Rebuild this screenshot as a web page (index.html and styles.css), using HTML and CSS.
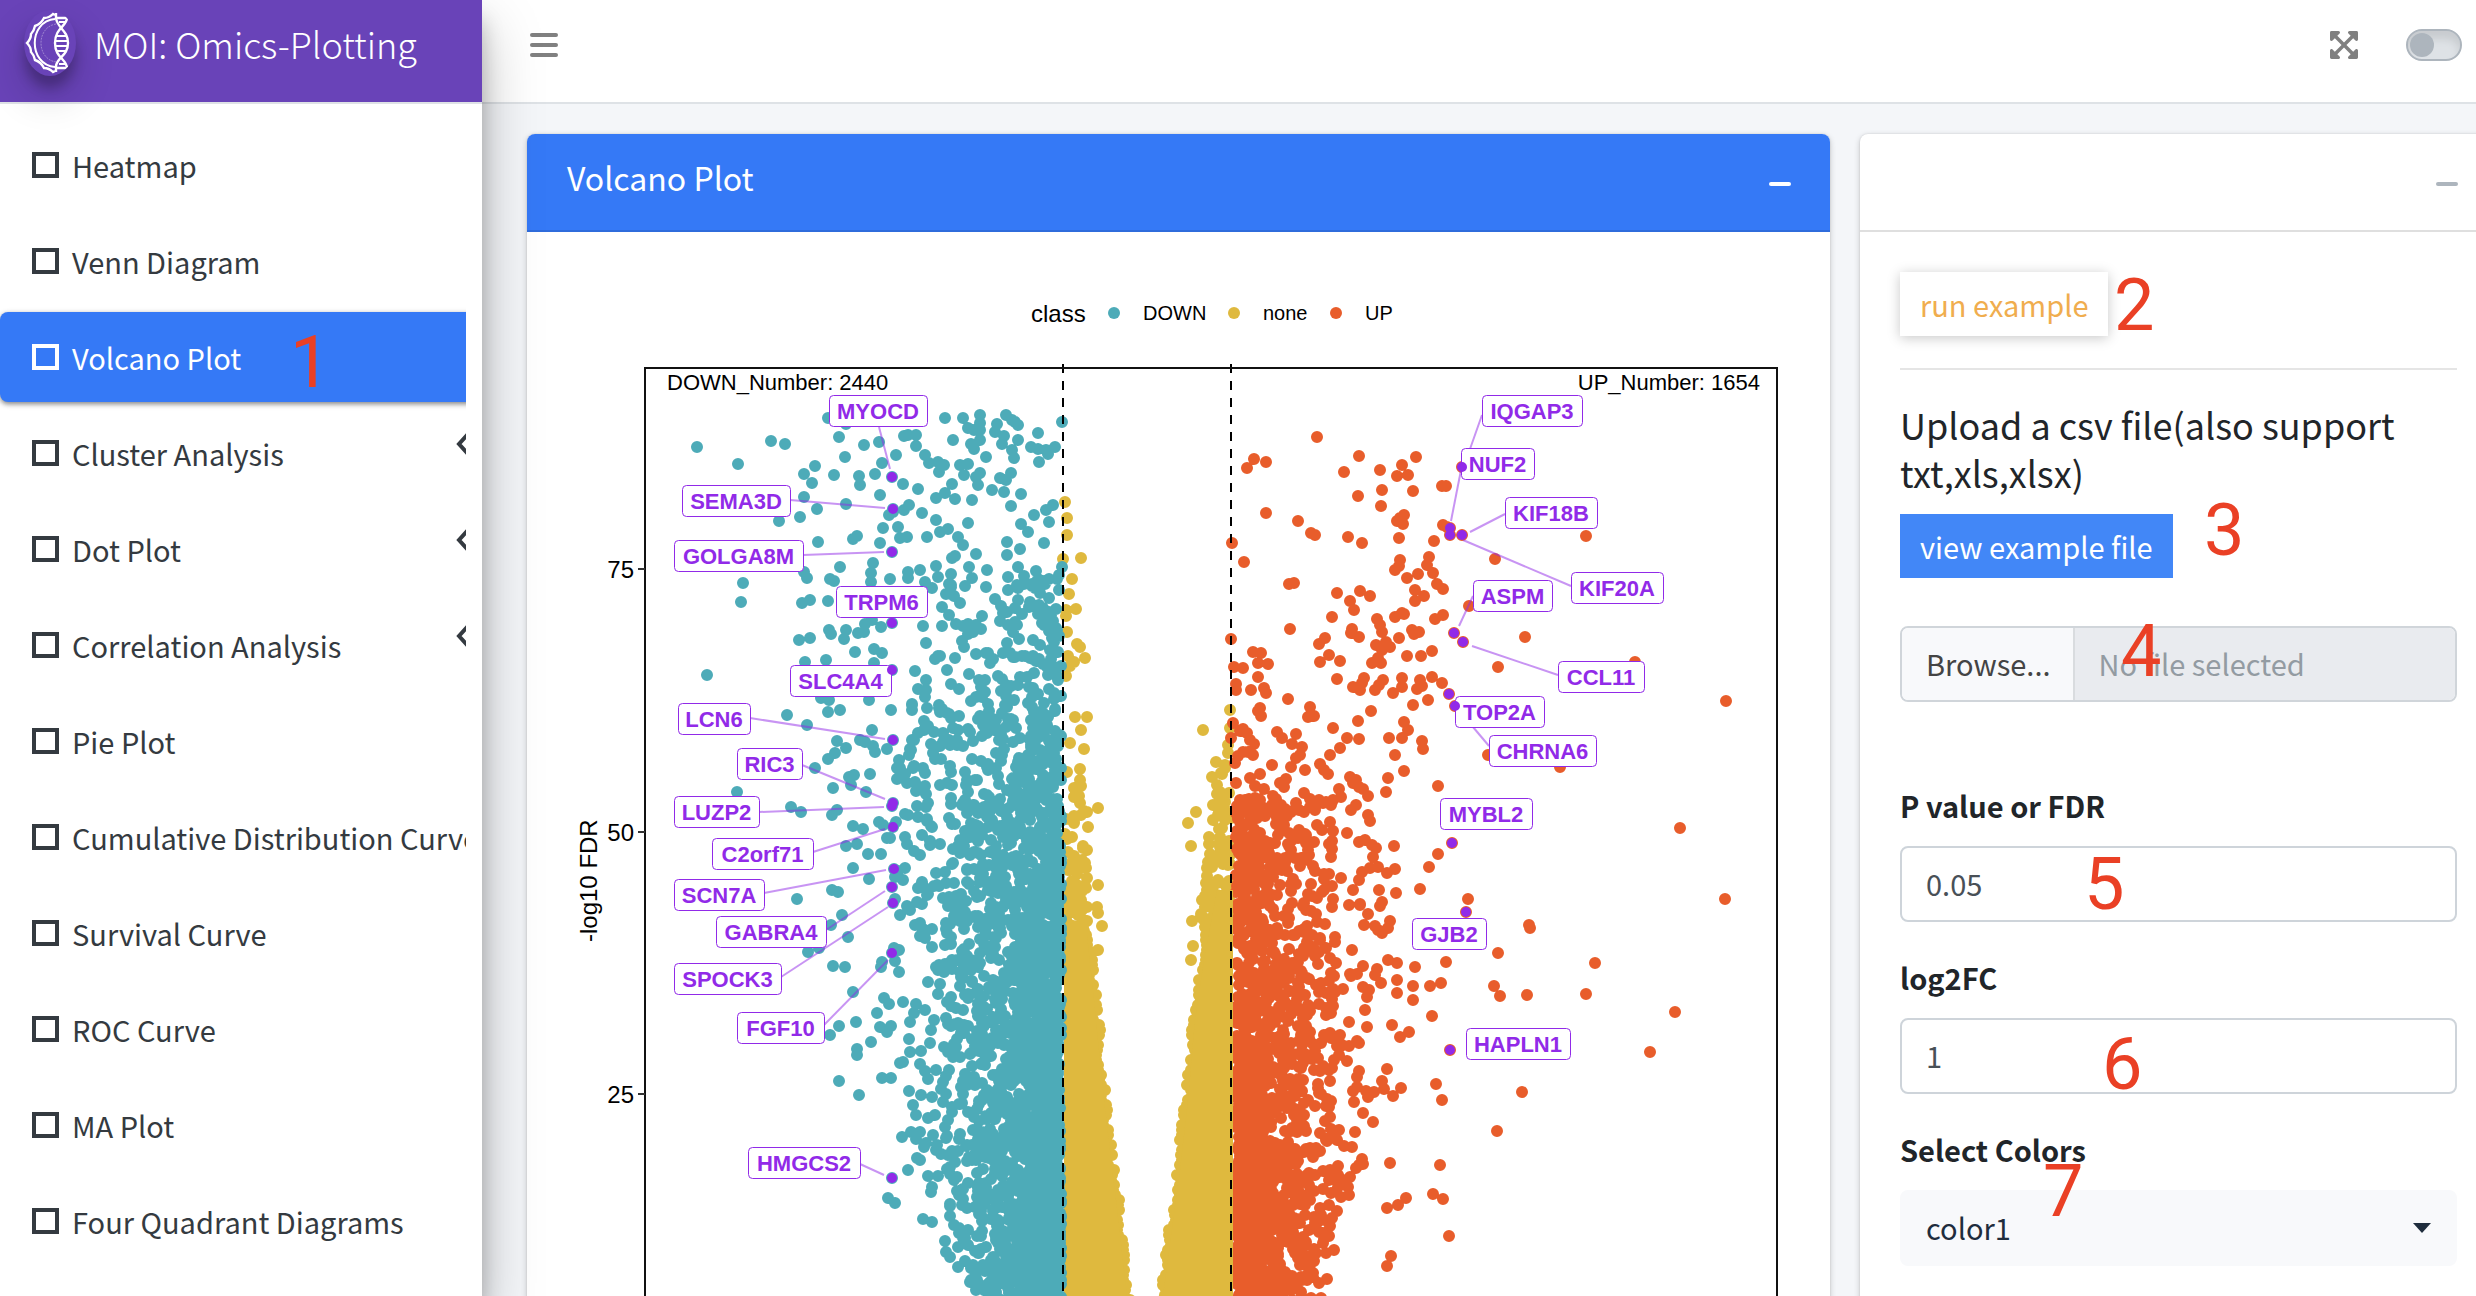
FILE: index.html
```html
<!DOCTYPE html>
<html lang="en">
<head>
<meta charset="utf-8">
<title>MOI: Omics-Plotting</title>
<link rel="stylesheet" href="styles.css">
</head>
<body>
<svg class="sprite" aria-hidden="true">
  <symbol id="i-square" viewBox="0 0 27 26"><rect x="2" y="2" width="23" height="22" fill="none" stroke="currentColor" stroke-width="4"/></symbol>
  <symbol id="i-angle" viewBox="0 0 14 24"><path d="M12 2 3 12l9 10" fill="none" stroke="currentColor" stroke-width="4"/></symbol>
  <symbol id="i-minus" viewBox="0 0 24 6"><rect x="1" y="1" width="22" height="4" rx="2" fill="currentColor"/></symbol>
</svg>
<div class="app">
  <aside class="sidebar">
    <a class="brand" href="#">
      <svg class="brand-logo" viewBox="0 0 52 66" fill="none" stroke="#fff" aria-hidden="true">
        <path d="M31 5 29 4Q25 8 20 8 17 14 11 16 10 21 7 24 7 29 3 33 7 37 7 42 10 45 11 50 17 52 20 58 25 58 29 62L31 61" stroke-width="2.4"/>
        <path d="M31 9C4 11 4 55 31 57" stroke-width="2"/>
        <path d="M32 14C12 17 12 49 32 52" stroke-width="1" stroke-dasharray="2 1" opacity=".35"/>
        <path d="M32 3v5C33 18 44 20 44 33S33 47 32 56v6" stroke-width="2.4"/>
        <path d="M32 8h11c0 8-12 10-12 25s12 16 12 25H32" stroke-width="2.4"/>
        <path d="M33 8h9M35 12h6M32 26h11M31 31h13M31 36h13M32 41h11M35 54h6" stroke-width="2"/>
      </svg>
      <span>MOI: Omics-Plotting</span>
    </a>
    <nav class="nav">
      <a href="#"><svg class="sq"><use href="#i-square"/></svg>Heatmap</a>
      <a href="#"><svg class="sq"><use href="#i-square"/></svg>Venn Diagram</a>
      <a href="#" class="active" aria-current="page"><svg class="sq"><use href="#i-square"/></svg>Volcano Plot<span class="mark mark-1">1</span></a>
      <a href="#"><svg class="sq"><use href="#i-square"/></svg>Cluster Analysis<svg class="angle"><use href="#i-angle"/></svg></a>
      <a href="#"><svg class="sq"><use href="#i-square"/></svg>Dot Plot<svg class="angle"><use href="#i-angle"/></svg></a>
      <a href="#"><svg class="sq"><use href="#i-square"/></svg>Correlation Analysis<svg class="angle"><use href="#i-angle"/></svg></a>
      <a href="#"><svg class="sq"><use href="#i-square"/></svg>Pie Plot</a>
      <a href="#"><svg class="sq"><use href="#i-square"/></svg>Cumulative Distribution Curve</a>
      <a href="#"><svg class="sq"><use href="#i-square"/></svg>Survival Curve</a>
      <a href="#"><svg class="sq"><use href="#i-square"/></svg>ROC Curve</a>
      <a href="#"><svg class="sq"><use href="#i-square"/></svg>MA Plot</a>
      <a href="#"><svg class="sq"><use href="#i-square"/></svg>Four Quadrant Diagrams</a>
    </nav>
  </aside>

  <div class="page">
    <header class="topbar">
      <button class="icon-btn" aria-label="Toggle sidebar">
        <svg width="28" height="24" viewBox="0 0 28 24" fill="currentColor"><rect width="28" height="4" rx="2"/><rect y="10" width="28" height="4" rx="2"/><rect y="20" width="28" height="4" rx="2"/></svg>
      </button>
      <div class="topbar-tools">
        <button class="icon-btn" aria-label="Full screen">
          <svg width="28" height="32" viewBox="0 0 448 512" fill="currentColor"><path d="M448 344v112a23.94 23.94 0 0 1-24 24H312c-21.39 0-32.09-25.9-17-41l36.2-36.2L224 295.6 116.77 402.9 153 439c15.09 15.1 4.39 41-17 41H24a23.94 23.94 0 0 1-24-24V344c0-21.4 25.89-32.1 41-17l36.19 36.2L184.46 256 77.18 148.7 41 185c-15.1 15.1-41 4.4-41-17V56a23.94 23.94 0 0 1 24-24h112c21.39 0 32.09 25.9 17 41l-36.2 36.2L224 216.4l107.23-107.3L295 73c-15.09-15.1-4.39-41 17-41h112a23.94 23.94 0 0 1 24 24v112c0 21.4-25.89 32.1-41 17l-36.19-36.2L263.54 256l107.28 107.3L407 327.1c15.1-15.2 41-4.5 41 16.9z"/></svg>
        </button>
        <input class="switch" type="checkbox" aria-label="Dark mode">
      </div>
    </header>

    <main class="content">
      <section class="card card-primary">
        <div class="card-header">
          <h1>Volcano Plot</h1>
          <button class="collapse" aria-label="Collapse"><svg width="24" height="6"><use href="#i-minus"/></svg></button>
        </div>
        <svg id="plot" class="plot" viewBox="527 232 1303 1280" role="img" aria-label="Volcano plot of log10 FDR">
          <g class="legend">
            <text x="1031" y="322" class="t24">class</text>
            <circle cx="1114" cy="313" r="6" class="down"/><text x="1143" y="320" class="t20">DOWN</text>
            <circle cx="1234" cy="313" r="6" class="none"/><text x="1263" y="320" class="t20">none</text>
            <circle cx="1336" cy="313" r="6" class="up"/><text x="1365" y="320" class="t20">UP</text>
          </g>
          <g id="points"></g>
          <path class="cut" d="M1063 364V1500M1231 364V1500"/>
          <path class="frame" d="M645 1500V368H1777V1500"/>
          <path class="ticks" d="M638 569h7M638 832h7M638 1094h7"/>
          <g class="t24" text-anchor="end">
            <text x="634" y="578">75</text><text x="634" y="841">50</text><text x="634" y="1103">25</text>
          </g>
          <text class="t24" transform="translate(597 942) rotate(-90)">-log10 FDR</text>
          <text class="t22" x="667" y="390">DOWN_Number: 2440</text>
          <text class="t22" x="1760" y="390" text-anchor="end">UP_Number: 1654</text>
          <g id="genes"></g>
        </svg>
      </section>

      <section class="card panel">
        <div class="card-header">
          <button class="collapse" aria-label="Collapse"><svg width="24" height="6"><use href="#i-minus"/></svg></button>
        </div>
        <form class="card-body">
          <button type="button" class="btn btn-run">run example</button>
          <hr>
          <h2>Upload a csv file(also support txt,xls,xlsx)</h2>
          <button type="button" class="btn btn-view">view example file</button>
          <div class="file-group">
            <label class="browse">Browse...<input type="file"></label>
            <input class="file-name" type="text" placeholder="No file selected" aria-label="Selected file" readonly>
          </div>
          <div class="field">
            <label for="fdr">P value or FDR</label>
            <input id="fdr" type="text" value="0.05">
          </div>
          <div class="field">
            <label for="fc">log2FC</label>
            <input id="fc" type="text" value="1">
          </div>
          <div class="field">
            <label for="colors">Select Colors</label>
            <div class="select"><select id="colors"><option>color1</option></select></div>
          </div>
        </form>
        <span class="mark mark-2">2</span>
        <span class="mark mark-3">3</span>
        <span class="mark mark-4">4</span>
        <span class="mark mark-5">5</span>
        <span class="mark mark-6">6</span>
        <span class="mark mark-7">7</span>
      </section>
    </main>
  </div>
</div>
<script src="plot.js"></script>
</body>
</html>
```
FILE: styles.css
```css
*, *::before, *::after { box-sizing: border-box; }

body {
  margin: 0;
  background: #f4f6f9;
  color: #212529;
  font-family: "Noto Sans CJK SC", "Noto Sans", sans-serif;
  font-size: 29px;
  line-height: 48px;
}

a { color: inherit; text-decoration: none; }
button, input, select { font: inherit; color: inherit; margin: 0; }
button { border: 0; background: none; padding: 0; cursor: pointer; }
h1, h2 { margin: 0; font-weight: 400; }

.sprite { position: absolute; width: 0; height: 0; }

.app {
  display: flex;
  height: 100vh;
  overflow: hidden;
}

/* Sidebar */
.sidebar {
  position: relative;
  z-index: 2;
  flex: 0 0 482px;
  min-width: 0;
  background: #fff;
  color: #343a40;
  box-shadow: 0 28px 56px rgba(0, 0, 0, .25), 0 20px 20px rgba(0, 0, 0, .22);
}
.brand {
  display: flex;
  align-items: center;
  gap: 18px;
  height: 104px;
  padding: 0 24px 16px;
  background: #6943b8;
  border-bottom: 2px solid #dee2e6;
  color: #fff;
  font-size: 36px;
  font-weight: 300;
  white-space: nowrap;
}
.brand-logo {
  width: 52px;
  height: 66px;
  border-radius: 50%;
  background: #6943b8;
  box-shadow: 0 20px 40px rgba(0, 0, 0, .19), 0 12px 12px rgba(0, 0, 0, .23);
}
.nav {
  display: flex;
  flex-direction: column;
  gap: 6px;
  margin-right: 16px;
  padding-top: 16px;
  overflow: hidden;
}
.nav a {
  position: relative;
  flex: none;
  display: flex;
  align-items: center;
  gap: 13px;
  width: 480px;
  height: 90px;
  padding-left: 32px;
  border-radius: 8px;
  white-space: nowrap;
}
.nav .active {
  background: #3579f6;
  color: #fff;
  box-shadow: 0 2px 6px rgba(0, 0, 0, .24), 0 2px 4px rgba(0, 0, 0, .3);
}
.sq { flex: none; width: 27px; height: 26px; }
.angle {
  width: 14px;
  height: 24px;
  margin: 0 10px 18px auto;
}

/* Top bar */
.page { flex: 1; min-width: 0; }
.topbar {
  display: flex;
  justify-content: space-between;
  height: 104px;
  padding: 0 14px 12px 48px;
  background: #fff;
  border-bottom: 2px solid #dee2e6;
  color: #808080;
}
.icon-btn { display: flex; align-items: center; }
.topbar-tools { display: flex; align-items: center; gap: 48px; }
.switch {
  appearance: none;
  display: flex;
  align-items: center;
  width: 56px;
  height: 32px;
  padding: 0 2px;
  border: 2px solid #adb5bd;
  border-radius: 16px;
  background: #dee2e6;
  box-shadow: inset 0 8px 8px rgba(0, 0, 0, .1);
}
.switch::before {
  content: "";
  width: 24px;
  height: 24px;
  border-radius: 50%;
  background: #adb5bd;
}

/* Cards; the row runs slightly past the right edge of the window */
.content {
  display: grid;
  grid-template-columns: 1303fr 637fr;
  gap: 30px;
  margin-right: -21px;
  padding: 30px 0 0 45px;
}
.card {
  position: relative;
  min-width: 0;
  background: #fff;
  border-radius: 8px;
  box-shadow: 0 0 2px rgba(0, 0, 0, .125), 0 2px 6px rgba(0, 0, 0, .2);
}
.card-header {
  display: flex;
  align-items: flex-start;
  height: 98px;
  padding: 24px 38px 0 40px;
  border-bottom: 2px solid #dfdfdf;
  border-radius: 8px 8px 0 0;
}
.card-primary .card-header {
  background: #3579f6;
  border-color: #2f6cdc;
  color: #fff;
}
.card-header h1 { font-size: 32px; line-height: 38px; }
.collapse {
  display: flex;
  align-items: center;
  height: 52px;
  margin-left: auto;
}
.panel .collapse { color: #adb5bd; }
.card-body { padding: 40px; }

/* Form */
.btn {
  display: block;
  height: 64px;
  padding: 0 20px;
  line-height: 60px;
}
.btn-run {
  background: #fff;
  color: #f0ad4e;
  box-shadow: 0 2px 12px rgba(0, 0, 0, .22);
}
.btn-view { background: #4287f7; color: #fff; }
hr {
  margin: 32px 0 30px;
  border: 0;
  border-top: 2px solid #e5e5e5;
}
h2 { font-size: 36px; line-height: 48px; margin-bottom: 18px; }
.file-group {
  display: flex;
  height: 76px;
  margin: 48px 0 80px;
  border: 2px solid #d0d5da;
  border-radius: 8px;
  overflow: hidden;
  line-height: 70px;
}
.browse {
  padding: 0 22px 0 24px;
  background: #f8f9fb;
  border-right: 2px solid #d9dcdf;
  color: #444;
  white-space: nowrap;
}
.browse input { position: absolute; width: 1px; height: 1px; opacity: 0; }
.file-name {
  flex: 1;
  min-width: 0;
  border: 0;
  padding: 0 24px 2px;
  background: #e9ebef;
}
.file-name::placeholder { color: #939ba2; opacity: 1; }
.field { margin-bottom: 32px; }
.field label {
  display: block;
  margin-bottom: 18px;
  line-height: 46px;
  font-weight: 700;
}
.field input, .field select {
  display: block;
  width: 100%;
  height: 76px;
  padding: 0 24px 2px;
  border: 2px solid #ced4da;
  border-radius: 8px;
  background: #fff;
  color: #495057;
}
.select { position: relative; }
.field select {
  appearance: none;
  border-color: #f8f9fb;
  background: #f8f9fb;
  color: #1f2d3d;
}
.select::after {
  content: "";
  position: absolute;
  right: 26px;
  top: 33px;
  border: 9px solid transparent;
  border-top: 10px solid #1f2d3d;
  border-bottom: 0;
  pointer-events: none;
}

/* Step numbers laid over the controls */
.mark {
  position: absolute;
  color: #ea4025;
  font: 400 72px/72px Roboto, sans-serif;
  pointer-events: none;
}
.mark-1 { left: 290px; top: 15px; }
.mark-2 { left: 254px; top: 136px; }
.mark-3 { left: 344px; top: 361px; }
.mark-4 { left: 261px; top: 482px; }
.mark-5 { left: 224px; top: 715px; }
.mark-6 { left: 242px; top: 895px; }
.mark-7 { left: 183px; top: 1022px; }

/* Plot */
.plot {
  display: block;
  width: 100%;
  font-family: "Liberation Sans", Arial, sans-serif;
}
.t20 { font-size: 20px; }
.t22 { font-size: 22px; }
.t24 { font-size: 24px; }
.down { fill: #4dabb8; stroke: #4dabb8; }
.none { fill: #dfb93e; stroke: #dfb93e; }
.up { fill: #e85d2b; stroke: #e85d2b; }
.legend circle { stroke: none; }
.dots { stroke-width: 12px; stroke-linecap: round; }
.hit { fill: none; stroke: #912ae8; stroke-width: 10px; stroke-linecap: round; }
.area { stroke: none; }
.frame { fill: none; stroke: #111; stroke-width: 2px; }
.ticks { fill: none; stroke: #333; stroke-width: 2px; }
.cut { fill: none; stroke: #000; stroke-width: 2px; stroke-dasharray: 9 8; }
.leader { fill: none; stroke: #912ae8; stroke-opacity: .5; stroke-width: 2px; }
.tag rect { fill: #fff; stroke: #912ae8; stroke-width: 1px; }
.tag text { fill: #912ae8; font-size: 22px; font-weight: 700; text-anchor: middle; }
```
FILE: plot.js
```js
const NS = 'http://www.w3.org/2000/svg';

function add(parent, name, attrs, text) {
  const node = document.createElementNS(NS, name);
  for (const key in attrs) node.setAttribute(key, attrs[key]);
  if (text) node.textContent = text;
  parent.appendChild(node);
  return node;
}

// Seeded generator, so that the cloud is the same on every load.
let seed = 20240;
function rnd() {
  seed = (seed * 1664525 + 1013904223) % 4294967296;
  return seed / 4294967296;
}
const parse = s => s.trim().split(/\s+/).map(p => p.split(',').map(Number));
const lerp = (stops, y) => {
  for (let i = 1; i < stops.length; i++) {
    if (y <= stops[i][0]) {
      const [y0, a] = stops[i - 1], [y1, b] = stops[i];
      return a + (b - a) * Math.max(0, (y - y0) / (y1 - y0));
    }
  }
  return stops[stops.length - 1][1];
};

const down = parse(`697,447 738,464 771,441 785,444 839,437 828,418 846,424 864,445 879,442 845,457
815,466 804,474 812,483 834,475 859,476 860,485 875,474 882,463 896,455 804,497 817,509 846,504 880,495
800,517 779,521 818,542 853,539 857,536 883,528 880,543 840,567 873,563 871,573 871,582 830,579 834,581
807,578 804,572 743,583 741,602 810,600 802,603 828,601 799,640 810,638 829,630 831,634 846,630 844,639
858,633 864,632 865,624 872,620 881,627 855,652 874,649 882,653 805,662 826,660 874,663 707,675 787,715
807,725 821,698 829,700 869,700 828,712 840,710 872,730 891,710 837,741 846,748 835,753 828,759 815,768
860,740 865,742 873,746 875,752 737,792 791,807 801,812 833,788 851,785 854,775 849,777 870,774 866,792
837,810 832,815 853,826 863,829 879,822 883,825 857,844 846,846 868,854 881,854 890,838 853,868 869,879
832,890 838,892 797,899 842,915 831,925 848,937 808,952 819,948 833,966 845,967 882,962 881,967 853,992
884,998 889,1004 877,1013 839,1026 856,1022 830,1035 880,1027 891,1026 887,1032 871,1042 857,1049
857,1055 839,1081 859,1095 882,1078 891,1078 888,1198 895,1203 902,1137 911,1132 917,1158 908,1170
923,1219 932,1222 945,1241 946,1252 950,1257 958,1267 970,1282 984,1290 945,418 963,418 980,415 980,423
1006,415 1012,420 1018,425 1015,422 997,424 980,430 968,428 974,430 995,432 1004,436 1002,444 1062,422
1038,433 953,440 980,440 971,444 974,449 986,457 1018,440 1012,450 1014,458 1031,447 1038,449 1046,450
1055,447 1048,454 1039,462 908,435 916,435 916,446 904,436 925,455 929,463 938,462 944,465 939,472 960,465
968,464 964,475 980,473 976,477 1011,473 1006,480 1000,478 978,485 952,484 918,489 903,484 936,498 945,493
955,499 972,500 992,490 1004,492 1021,494 1011,506 1053,505 1046,510 1034,515 1049,522 1021,524 1028,532
893,512 889,515 904,510 909,505 922,513 936,520 898,527 900,538 907,537 927,537 940,532 948,529 968,523
958,537 963,545 1044,543 1020,549 1007,542 1007,555 976,554 952,558 955,556 936,566 969,567 987,570
1018,567 1036,571 1062,567 908,572 920,570 908,578 890,579 925,582 938,577 951,574 949,584`);

const none = parse(`1065,502 1067,518 1067,535 1063,559 1081,558 1072,579 1069,594 1076,609 1066,616
1066,610 1067,632 1077,644 1080,647 1068,656 1085,658 1074,662 1070,666 1066,676 1075,717 1087,717
1081,730 1070,743 1084,749 1080,769 1067,772 1081,786 1074,788 1078,795 1080,803 1084,811 1098,808
1074,817 1088,827 1087,850 1083,848 1086,868 1098,885 1075,897 1097,907 1098,913 1102,926 1098,950
1230,710 1230,728 1203,730 1228,745 1228,753 1216,762 1225,768 1221,773 1212,777 1217,785 1217,794
1213,805 1196,812 1225,802 1188,823 1213,820 1191,846 1208,862 1192,921 1193,946 1191,960`);

const up = parse(`1317,437 1254,459 1247,468 1266,462 1359,456 1416,457 1402,465 1344,472 1380,470
1397,476 1408,475 1358,496 1382,490 1413,491 1442,486 1446,486 1381,506 1266,513 1298,521 1404,515
1397,521 1403,524 1400,518 1311,533 1315,535 1348,537 1362,543 1399,538 1434,541 1443,525 1447,527
1232,543 1244,562 1400,560 1395,570 1399,566 1429,557 1427,565 1433,573 1418,574 1407,578 1437,584
1443,589 1289,584 1294,583 1337,593 1360,591 1370,596 1350,601 1354,610 1415,590 1424,596 1415,601
1332,617 1290,629 1352,629 1351,633 1359,637 1325,638 1319,644 1329,655 1320,662 1340,661 1377,619
1380,625 1382,632 1395,617 1402,613 1404,614 1435,619 1443,615 1412,630 1414,634 1419,632 1399,638
1376,645 1386,642 1390,647 1382,650 1432,651 1407,656 1421,656 1378,658 1372,663 1381,663 1586,536
1495,559 1469,606 1525,637 1635,662 1498,667 1726,701 1488,755 1560,767 1438,786 1231,639 1253,652
1261,653 1258,663 1268,664 1234,667 1243,668 1258,677 1236,684 1236,690 1251,690 1264,688 1266,693
1288,699 1337,679 1364,678 1353,687 1360,690 1362,683 1383,680 1375,690 1379,685 1402,678 1402,687
1393,693 1420,680 1417,689 1422,686 1432,677 1442,683 1428,700 1413,705 1371,711 1358,721 1310,707
1308,717 1314,716 1260,708 1258,711 1261,716 1333,728 1404,722 1408,730 1389,738 1402,738 1422,741
1423,749 1395,755 1404,771 1388,778 1386,792 1680,828 1725,899 1468,899 1529,925 1530,928 1498,953
1595,963 1446,962 1415,967 1494,986 1500,996 1527,995 1586,994 1675,1012 1650,1052 1522,1092 1497,1131
1436,1084 1442,1100 1440,1165 1433,1194 1443,1199 1406,1198 1398,1205 1387,1208 1449,1236 1391,1256
1387,1266 1438,854 1429,867 1420,889 1432,1016 1441,983 1430,986 1413,986 1413,1000 1397,980 1397,993
1409,1032 1400,1037 1401,1088 1393,1096 1390,1163 1462,467 1450,528 1450,535 1462,535 1454,633
1463,642 1449,694 1455,706 1452,843 1466,912 1450,1050 1394,846 1372,845 1376,848 1378,867 1395,869
1387,873 1396,893 1380,906 1368,914 1390,921 1378,930 1388,960 1397,963 1377,969
1233,723 1231,738 1240,731 1243,729 1247,733 1250,740 1254,744 1277,732 1282,738 1296,734 1292,744
1302,747 1300,755 1296,758 1291,767 1305,770 1272,765 1238,756 1243,752 1248,752 1253,755 1235,763
1320,764 1324,770 1328,774 1330,755 1340,748 1347,738 1359,739 1350,777 1353,783 1356,780 1359,787
1363,789 1368,796 1339,789 1341,797 1250,778 1260,774 1236,783 1255,786 1264,789 1280,783 1286,779
1284,787 1273,796 1304,793`);

// Bands of the cloud: [from y, to y, count, spread, reach] measured from the cut-off line.
function cloud(list, edge, dir, bands) {
  for (const [y0, y1, count, spread, reach0, reach1] of bands) {
    for (let i = 0; i < count;) {
      const t = rnd(), off = -Math.log(1 - rnd()) * spread;
      if (off > reach0 + (reach1 - reach0) * t) continue;
      list.push([Math.round(edge + dir * off), Math.round(y0 + (y1 - y0) * t)]);
      i++;
    }
  }
}
cloud(down, 1061, -1, [
  [575, 650, 82, 130, 140, 140], [650, 710, 82, 85, 150, 150], [710, 780, 150, 90, 170, 180],
  [780, 850, 200, 72, 175, 175], [850, 900, 175, 62, 175, 175], [900, 1000, 340, 58, 170, 165],
  [1000, 1100, 430, 52, 165, 160], [1100, 1200, 480, 48, 155, 140], [1200, 1320, 680, 34, 120, 80]]);
cloud(up, 1236, 1, [
  [798, 900, 230, 50, 135, 145], [900, 1000, 230, 52, 150, 160],
  [1000, 1100, 290, 50, 160, 150], [1100, 1200, 360, 46, 145, 125], [1200, 1320, 560, 34, 115, 85]]);

for (let i = 0; i < 80; i++) {
  const y = 775 + 170 * Math.sqrt(rnd());
  none.push([Math.round(1065 + rnd() * 22), Math.round(y)]);
}
for (let i = 0; i < 90; i++) {
  const y = 755 + 175 * Math.sqrt(rnd());
  none.push([Math.round(1231 - rnd() * lerp([[755, 12], [930, 34]], y)), Math.round(y)]);
}
const innerL = [[935, 1090], [1010, 1098], [1100, 1107], [1200, 1119], [1296, 1130], [1500, 1146]];
const innerR = [[890, 1214], [960, 1201], [1020, 1192], [1100, 1185], [1170, 1177], [1296, 1160], [1500, 1146]];
for (let y = 935; y < 1340; y += 5) none.push([Math.round(lerp(innerL, y) - rnd() * 7), y]);
for (let y = 895; y < 1340; y += 5) none.push([Math.round(lerp(innerR, y) + rnd() * 7), y]);

const points = document.getElementById('points');
const dots = list => list.map(([x, y]) => `M${x} ${y}h.01`).join('');
const area = (edge, stops) =>
  `M${edge} ${stops[0][0]}` + stops.map(([y, x]) => `L${x} ${y}`).join('') + `L${edge} 1500Z`;

add(points, 'path', { class: 'dots none', d: dots(none) });
add(points, 'path', { class: 'area none', d: area(1064, innerL.map(([y, x]) => [y, x - 3])) });
add(points, 'path', { class: 'dots down', d: dots(down) });
add(points, 'path', { class: 'dots up', d: dots(up) });
add(points, 'path', { class: 'area none', d: area(1233, innerR.map(([y, x]) => [y, x + 3])) });

// Labelled genes: name, box left, box top, box width, leader line.
const genes = [
  ['MYOCD', 829, 395, 98, '879,427 890,469'], ['SEMA3D', 682, 485, 108, '790,500 885,508'],
  ['GOLGA8M', 674, 540, 129, '803,555 884,552'], ['TRPM6', 836, 586, 91],
  ['SLC4A4', 790, 665, 101], ['LCN6', 678, 703, 72, '750,718 885,739'],
  ['RIC3', 737, 748, 65, '802,765 885,799'], ['LUZP2', 674, 796, 85, '759,812 884,807'],
  ['C2orf71', 712, 838, 101, '813,852 885,829'], ['SCN7A', 674, 879, 90, '764,893 886,870'],
  ['GABRA4', 716, 916, 110, '826,930 885,891'], ['SPOCK3', 674, 963, 107, '781,977 888,907'],
  ['FGF10', 737, 1012, 87, '824,1025 888,960'], ['HMGCS2', 748, 1147, 112, '860,1164 884,1175'],
  ['IQGAP3', 1482, 395, 100, '1482,415 1470,449'], ['NUF2', 1461, 448, 73, '1461,470 1451,521'],
  ['KIF18B', 1505, 497, 92, '1505,514 1470,532'], ['KIF20A', 1571, 572, 92, '1571,586 1463,540'],
  ['ASPM', 1473, 580, 79, '1473,596 1459,626'], ['CCL11', 1558, 661, 86, '1558,675 1472,646'],
  ['TOP2A', 1455, 696, 89], ['CHRNA6', 1489, 735, 107, '1473,727 1489,746'],
  ['MYBL2', 1440, 798, 92], ['GJB2', 1412, 918, 74], ['HAPLN1', 1466, 1028, 104]];
const hits = parse(`892,477 893,509 892,552 892,623 892,670 893,740 893,803 892,806 893,827 894,869
892,887 893,903 892,953 892,1178 1462,467 1450,528 1450,535 1462,535 1454,633 1463,642 1449,694 1455,706
1452,843 1466,912 1450,1050`);

const layer = document.getElementById('genes');
for (const [, , , , line] of genes) if (line) add(layer, 'polyline', { class: 'leader', points: line });
for (const [name, x, y, w] of genes) {
  const tag = add(layer, 'g', { class: 'tag' });
  add(tag, 'rect', { x: x + .5, y: y + .5, width: w, height: 31, rx: 4 });
  add(tag, 'text', { x: x + w / 2, y: y + 24 }, name);
}
add(points, 'path', { class: 'dots down', d: dots(hits.slice(0, 14)) });
add(layer, 'path', { class: 'hit', d: dots(hits) });
```
